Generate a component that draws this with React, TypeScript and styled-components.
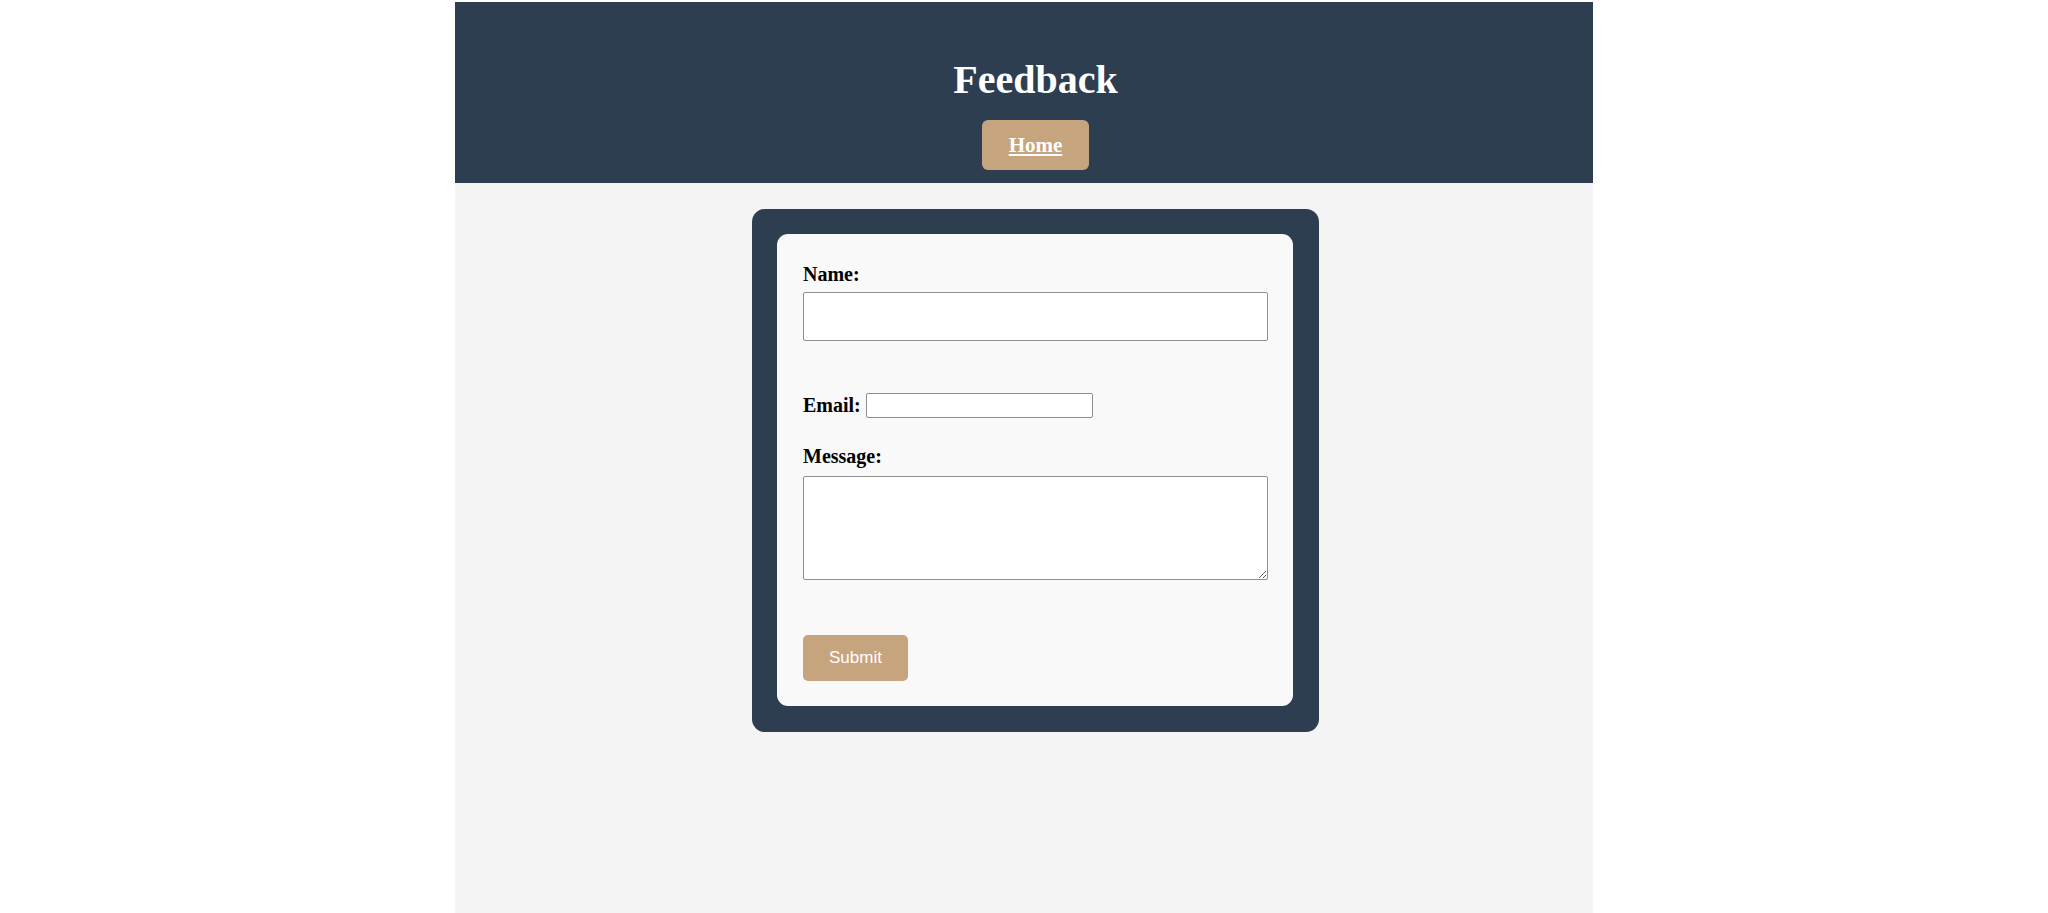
import React from "react";
import styled, { createGlobalStyle } from "styled-components";

const GlobalStyle = createGlobalStyle`
  html, body {
    margin: 0;
    padding: 0;
    background: #ffffff;
  }
  body {
    font-family: "Liberation Serif", "Times New Roman", serif;
  }
  * { box-sizing: border-box; }
`;

const Page = styled.div`
  width: 1138px;
  min-height: 911px;
  margin: 2px auto 0;
  background: #f4f4f4;
  display: flex;
  flex-direction: column;
`;

const Header = styled.header`
  background: #2c3e50;
  padding: 56px 0 13px 23px;
  display: flex;
  flex-direction: column;
  align-items: center;
`;

const Title = styled.h1`
  margin: 0 0 18px;
  font-family: "Liberation Serif", "Times New Roman", serif;
  font-weight: bold;
  font-size: 40px;
  line-height: 44px;
  color: #ffffff;
`;

const NavLink = styled.a`
  display: block;
  width: 107px;
  height: 50px;
  line-height: 50px;
  text-align: center;
  background: #c6a47d;
  border-radius: 6px;
  color: #ffffff;
  font-family: "Liberation Serif", "Times New Roman", serif;
  font-weight: bold;
  font-size: 21px;
  text-decoration: underline;
`;

const Main = styled.main`
  padding: 26px 0 0 23px;
  display: flex;
  justify-content: center;
`;

const OuterCard = styled.section`
  width: 567px;
  background: #2c3e50;
  border-radius: 13px;
  padding: 25px 26px 26px 25px;
`;

const InnerCard = styled.form`
  background: #f9f9f9;
  border-radius: 11px;
  padding: 29px 25px 25px 26px;
  display: flex;
  flex-direction: column;
  align-items: flex-start;
`;

const Label = styled.label<{ $gap?: number }>`
  display: block;
  font-family: "Liberation Serif", "Times New Roman", serif;
  font-weight: bold;
  font-size: 20px;
  line-height: 23px;
  color: #000000;
  margin-bottom: ${(p) => p.$gap ?? 6}px;
`;

const WideInput = styled.input`
  width: 465px;
  height: 49px;
  border: 1px solid #8f8f8f;
  border-radius: 2px;
  background: #ffffff;
  padding: 0 4px;
  font-size: 16px;
`;

const InlineRow = styled.div`
  display: flex;
  align-items: center;
  gap: 5px;
  margin-top: 52px;
  margin-bottom: 27px;
`;

const InlineLabel = styled(Label)`
  margin-bottom: 0;
`;

const SmallInput = styled.input`
  width: 227px;
  height: 25px;
  border: 1px solid #8f8f8f;
  border-radius: 2px;
  background: #ffffff;
  padding: 0 3px;
  font-size: 13px;
`;

const TextArea = styled.textarea`
  display: block;
  width: 465px;
  height: 104px;
  border: 1px solid #8f8f8f;
  border-radius: 2px;
  background: #ffffff;
  padding: 2px 4px;
  font-size: 14px;
  margin: 0;
`;

const SubmitButton = styled.button`
  margin-top: 55px;
  width: 105px;
  height: 46px;
  border: none;
  border-radius: 5px;
  background: #c6a47d;
  color: #ffffff;
  font-family: "Liberation Sans", Arial, sans-serif;
  font-size: 17px;
  cursor: pointer;
`;

export default function App() {
  return (
    <>
      <GlobalStyle />
      <Page>
        <Header>
          <Title>Feedback</Title>
          <NavLink href="#">Home</NavLink>
        </Header>
        <Main>
          <OuterCard>
            <InnerCard onSubmit={(e) => e.preventDefault()}>
              <Label htmlFor="name">Name:</Label>
              <WideInput id="name" type="text" />
              <InlineRow>
                <InlineLabel htmlFor="email">Email:</InlineLabel>
                <SmallInput id="email" type="email" />
              </InlineRow>
              <Label htmlFor="message" $gap={8}>Message:</Label>
              <TextArea id="message" />
              <SubmitButton type="submit">Submit</SubmitButton>
            </InnerCard>
          </OuterCard>
        </Main>
      </Page>
    </>
  );
}
